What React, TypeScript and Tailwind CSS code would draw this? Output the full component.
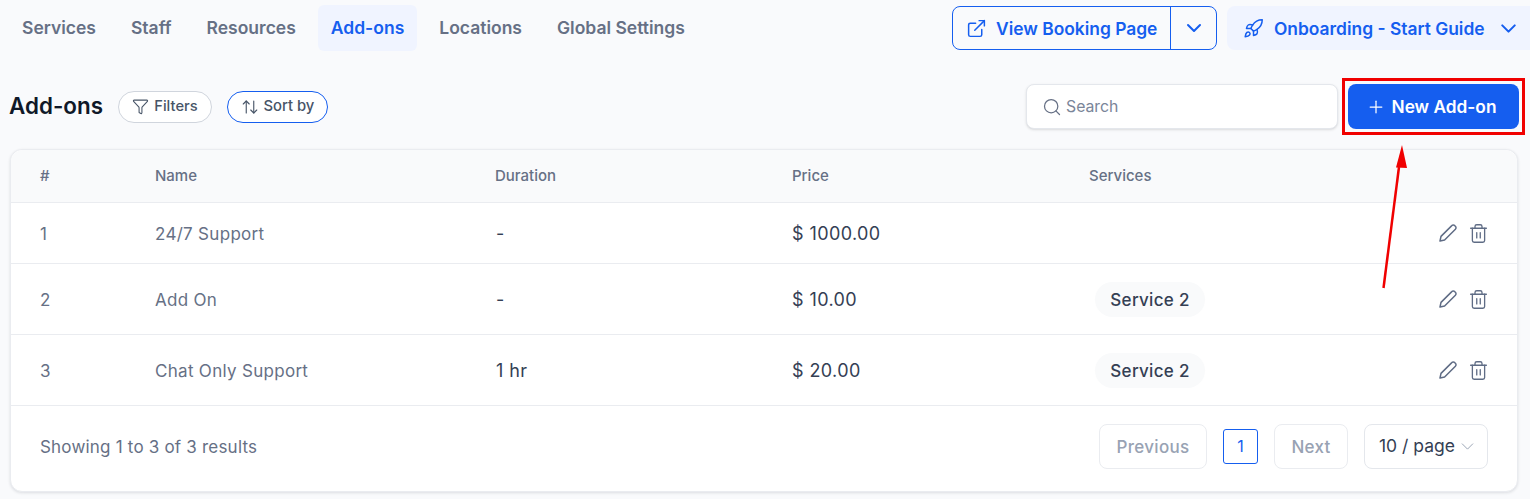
import { ArrowUpDown, ChevronDown, ExternalLink, Funnel, Plus, Rocket, Search, Trash2 } from 'lucide-react';

const tabs = ['Services', 'Staff', 'Resources', 'Add-ons', 'Locations', 'Global Settings'];

const rows = [
  { id: 1, name: '24/7 Support', duration: '-', price: '$ 1000.00', service: '', height: 'h-[61px]' },
  { id: 2, name: 'Add On', duration: '-', price: '$ 10.00', service: 'Service 2', height: 'h-[71px]' },
  { id: 3, name: 'Chat Only Support', duration: '1 hr', price: '$ 20.00', service: 'Service 2', height: 'h-[71px]' },
];

function PencilIcon() {
  return (
    <svg width="20" height="20" viewBox="0 0 20 20" fill="none" stroke="#5f6c85" strokeWidth="1.5" strokeLinejoin="round" strokeLinecap="round">
      <path d="M2 18l1-4.6L13.8 2.6a2 2 0 0 1 2.9 0l.7.7a2 2 0 0 1 0 2.9L6.6 17z" />
    </svg>
  );
}

export default function App() {
  return (
    <div className="relative h-[499px] w-[1530px] overflow-hidden bg-[#f9fafc] font-['Inter',sans-serif]">
      {/* top nav */}
      <div className="flex h-[56px] items-start pt-[5px]">
        <nav className="flex flex-1 gap-[9px] pl-[9px]">
          {tabs.map((tab) => (
            <div
              key={tab}
              className={
                tab === 'Add-ons'
                  ? 'flex h-[46px] items-center rounded-md bg-[#f0f4ff] px-[13px] text-[17.5px] font-semibold text-[#155eef]'
                  : 'flex h-[46px] items-center rounded-md px-[13px] text-[17.5px] font-semibold text-[#667085]'
              }
            >
              {tab}
            </div>
          ))}
        </nav>
        <div className="mt-px flex h-[44px] w-[265px] rounded-lg border border-[#155eef] text-[#155eef]">
          <div className="flex w-[218px] items-center gap-[9px] border-r border-[#155eef] pl-[13px] pt-[2px] text-[17.4px] font-semibold">
            <ExternalLink size={21} strokeWidth={1.7} className="-mt-[2px]" />
            View Booking Page
          </div>
          <div className="flex flex-1 items-center justify-center">
            <ChevronDown size={24} strokeWidth={2} />
          </div>
        </div>
        <div className="mt-px ml-[10px] flex h-[44px] w-[303px] items-center gap-[10px] rounded-l-lg bg-[#f0f4ff] pl-[16px] pt-[3px] text-[17.4px] font-semibold text-[#155eef]">
          <Rocket size={21} strokeWidth={1.7} className="-mt-[3px]" />
          Onboarding - Start Guide
          <ChevronDown size={25} strokeWidth={2} className="-mt-[3px] ml-[1px]" />
        </div>
      </div>

      {/* toolbar */}
      <div className="mt-[28px] flex h-[45px] items-center pl-[9px] pr-[11px]">
        <h1 className="-mt-[1px] text-[22.4px] font-semibold text-[#101828]">Add-ons</h1>
        <button className="ml-[15px] flex h-[32px] w-[94px] items-center justify-center gap-[5px] rounded-full border border-[#d0d5dd] bg-white text-[14.7px] font-medium text-[#475467]">
          <Funnel size={17} strokeWidth={1.5} />
          Filters
        </button>
        <button className="ml-[15px] flex h-[32px] w-[101px] items-center justify-center gap-[5px] rounded-full border border-[#155eef] bg-white text-[14.8px] font-medium text-[#475467]">
          <ArrowUpDown size={18} strokeWidth={1.5} />
          Sort by
        </button>
        <div className="ml-auto flex h-[45px] w-[312px] items-center gap-[4px] rounded-lg border border-[#e4e7ec] bg-white pl-[15px] text-[15.8px] text-[#7a8599] shadow-sm">
          <Search size={20} strokeWidth={1.5} color="#667085" />
          <span className="pt-[1px]">Search</span>
        </div>
        <button className="ml-[10px] flex h-[45px] w-[171px] items-center justify-center gap-[6px] rounded-lg bg-[#155eef] pr-[5px] text-[17.3px] font-semibold text-white">
          <Plus size={20} strokeWidth={1.5} />
          New Add-on
        </button>
      </div>

      {/* table card */}
      <div className="mx-[10px] mt-[20px] w-[1508px] rounded-xl border border-[#eaecf0] bg-white shadow-[0_1px_3px_rgba(16,24,40,0.12)]">
        <div className="grid h-[53px] grid-cols-[115px_340px_297px_297px_1fr] items-center rounded-t-xl border-b border-[#eaecf0] bg-[#f9fafb] pt-[1px] pl-[29px] text-[15px] font-medium text-[#667085]">
          <div>#</div>
          <div>Name</div>
          <div>Duration</div>
          <div>Price</div>
          <div>Services</div>
        </div>
        {rows.map((row) => (
          <div
            key={row.id}
            className={`grid ${row.height} grid-cols-[115px_340px_297px_297px_1fr] items-center border-b border-[#eaecf0] pl-[29px] text-[17px] tracking-[0.3px]`}
          >
            <div className="pt-[3px] text-[#667085]">{row.id}</div>
            <div className="pt-[3px] text-[#667085]">{row.name}</div>
            <div className="pl-px text-[18px] tracking-[0.4px] text-[#344054]">{row.duration}</div>
            <div className="text-[18px] tracking-[0.4px] text-[#344054]">{row.price}</div>
            <div className="flex items-center pr-[28px]">
              {row.service && (
                <span className="ml-[6px] flex h-[35px] w-[110px] items-center justify-center rounded-full bg-[#f9fafb] pt-[3px] font-medium text-[#344054]">
                  {row.service}
                </span>
              )}
              <div className="ml-auto flex items-center gap-[10px]">
                <PencilIcon />
                <Trash2 size={21} strokeWidth={1.5} color="#5f6c85" />
              </div>
            </div>
          </div>
        ))}
        <div className="flex h-[85px] items-center pb-[5px] pl-[29px] pr-[29px]">
          <span className="pt-[3px] text-[17px] tracking-[0.2px] text-[#667085]">Showing 1 to 3 of 3 results</span>
          <div className="ml-auto flex h-[45px] w-[108px] items-center justify-center rounded-lg border border-[#eaecf0] pt-[3px] text-[17px] font-medium tracking-[0.3px] text-[#98a2b3]">
            Previous
          </div>
          <div className="ml-[16px] flex h-[35px] w-[35px] items-center justify-center rounded-[3px] border border-[#155eef] text-[16px] text-[#155eef]">
            1
          </div>
          <div className="ml-[16px] flex h-[45px] w-[74px] items-center justify-center rounded-lg border border-[#eaecf0] pt-[3px] text-[17px] font-medium tracking-[0.3px] text-[#98a2b3]">
            Next
          </div>
          <div className="ml-[16px] flex h-[45px] w-[124px] items-center gap-[2px] rounded-lg border border-[#e4e7ec] pl-[14px] pt-[1px] text-[17.5px] text-[#344054]">
            10 / page
            <ChevronDown size={21} strokeWidth={1.1} color="#98a2b3" />
          </div>
        </div>
      </div>

      {/* annotation overlay */}
      <div className="absolute left-[1342px] top-[78px] h-[57px] w-[183px] border-[3px] border-[#f00000]" />
      <svg className="absolute left-[1370px] top-[135px]" width="50" height="160" viewBox="0 0 50 160" fill="none">
        <path d="M13.5 153L29 32" stroke="#f00000" strokeWidth="2.5" />
        <path d="M32 10L26 32.5L37 33z" fill="#f00000" />
      </svg>
    </div>
  );
}
